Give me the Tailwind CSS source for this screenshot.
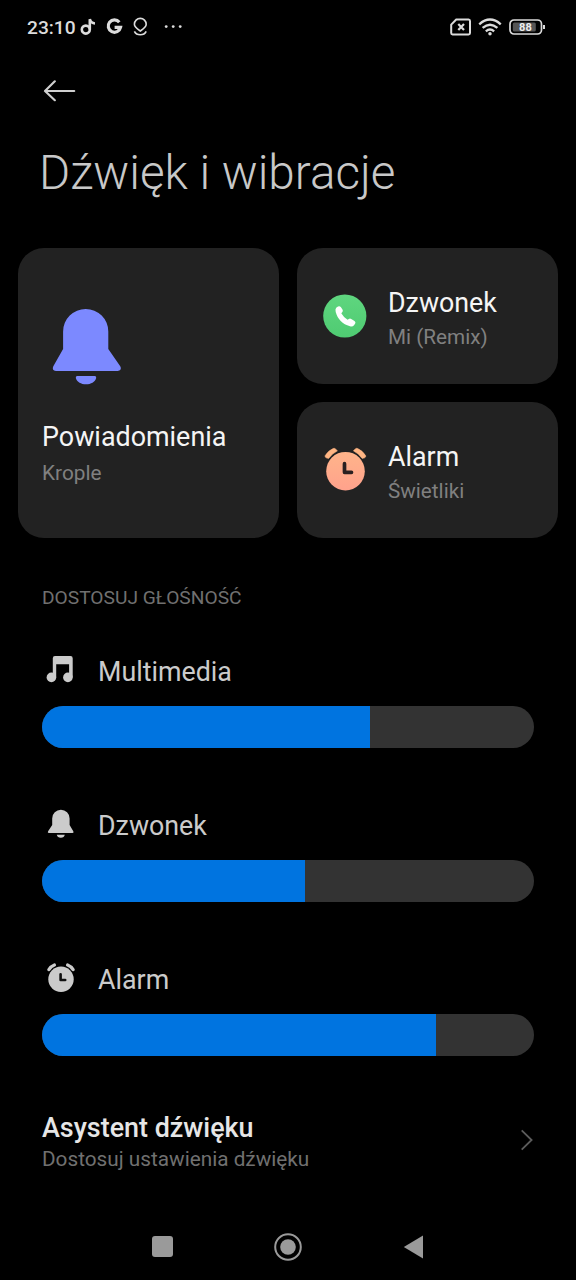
<!DOCTYPE html>
<html lang="pl">
<head>
<meta charset="utf-8">
<title>Dźwięk i wibracje</title>
<script src="https://cdn.jsdelivr.net/npm/@tailwindcss/browser@4"></script>
</head>
<body class="bg-black">
<div class="w-[576px] h-[1280px] overflow-hidden bg-black font-['Roboto',sans-serif] flex flex-col whitespace-nowrap">

  <!-- Status bar -->
  <header class="h-[54px] shrink-0 flex items-center justify-between pl-[27px] pr-[30px] text-[#dcdcdc]">
    <div class="flex items-center">
      <span class="w-[53px] pt-px text-[19.2px] leading-[24px] font-medium">23:10</span>
      <svg class="w-[17px] h-[20px]" viewBox="0 0 17 20" fill="none" stroke="currentColor"><circle cx="5.8" cy="12.6" r="4" stroke-width="2.6"/><path d="M9.8 12.6V2.2C10.5 4.8 12.3 6.4 15 6.5" stroke-width="2.6"/></svg>
      <svg class="ml-[9px] w-[17px] h-[18px]" viewBox="0 0 17 18" fill="none" stroke="currentColor" stroke-width="3.2"><path d="M13.3 4.2A6.2 6.2 0 1 0 14.5 9.4H8.6"/></svg>
      <svg class="ml-[8px] w-[18px] h-[20px]" viewBox="0 0 18 20" fill="none" stroke="currentColor" stroke-width="1.6"><path d="M9.3 14C6.6 12.2 3.4 10.4 3.4 7.3A5.9 5.9 0 0 1 15.2 7.3C15.2 10.4 12 12.2 9.3 14Z"/><path d="M3.4 14.4Q5 17.8 9.3 17.8T15.2 14.4" /></svg>
      <svg class="ml-[15px] w-[20px] h-[4px]" viewBox="0 0 20 4" fill="currentColor"><circle cx="2.2" cy="1.6" r="1.4"/><circle cx="9.2" cy="1.6" r="1.4"/><circle cx="16.2" cy="1.6" r="1.4"/></svg>
    </div>
    <div class="flex items-center">
      <svg class="w-[22px] h-[18px]" viewBox="0 0 22 18" fill="none" stroke="currentColor"><path d="M6.2 1.5H18.6Q20 1.5 20 3V15Q20 16.4 18.6 16.4H2.6Q1.2 16.4 1.2 15V6.6Z" stroke-width="2" stroke-linejoin="round"/><path d="M8.3 6L14 12M14 6L8.3 12" stroke-width="2.2"/></svg>
      <svg class="ml-[6px] w-[24px] h-[20px]" viewBox="0 0 25 20" fill="none" stroke="currentColor" stroke-width="2.5"><path d="M1.3 7.2Q12.5 -2.6 23.7 7.2"/><path d="M4.8 11Q12.5 4.2 20.2 11"/><path d="M8.2 14.6Q12.5 10.8 16.8 14.6"/><circle cx="12.5" cy="17" r="1.8" fill="currentColor" stroke="none"/></svg>
      <svg class="ml-[7px] w-[37px] h-[18px]" viewBox="0 0 37 18"><rect x="1" y="2" width="31.5" height="14" rx="4" fill="none" stroke="currentColor" stroke-width="1.7"/><rect x="3.8" y="4.6" width="23" height="8.8" rx="1.5" fill="#555"/><path d="M35 7V11" stroke="currentColor" stroke-width="2"/><text x="16.4" y="13" text-anchor="middle" font-family="Roboto" font-weight="700" font-size="11" fill="#eee">88</text></svg>
    </div>
  </header>

  <!-- Title -->
  <div class="h-[91px] shrink-0 pl-[43px] pt-[26px]">
    <svg class="w-[34px] h-[24px]" viewBox="0 0 34 24" fill="none" stroke="#cfcfcf" stroke-width="2.2" stroke-linecap="round" stroke-linejoin="round"><path d="M31.2 11H2M11.8 1.3L2 11L11.8 20.2"/></svg>
  </div>
  <h1 class="h-[102.5px] shrink-0 pl-[39px] text-[47.6px] leading-[56px] font-light text-[#c8c8c8]">Dźwięk i wibracje</h1>

  <!-- Sound cards -->
  <section class="h-[290px] shrink-0 grid grid-cols-2 grid-rows-2 gap-[18px] px-[18px]">
    <div class="row-span-2 bg-[#222222] rounded-[26px] pl-[24px] pt-[60px]">
      <svg class="ml-[10px] w-[70px] h-[78px]" viewBox="0 0 70 78" fill="#7c89ff"><path d="M11.1 23.5A22.6 22.6 0 0 1 56.3 23.5V41L67.9 57.8C69.9 60.6 68.5 63 65.5 63H4C1 63 0 60.6 1.6 57.8L11.1 41Z"/><path d="M25.3 68H42.7Q44.6 68 44.2 70C43 74 39 76.3 34 76.3S25 74 23.8 70Q23.4 68 25.3 68Z"/></svg>
      <div class="mt-[35px] text-[26.9px] leading-[32px] text-[#f5f5f5]">Powiadomienia</div>
      <div class="mt-[8px] text-[20.8px] leading-[25px] text-[#808080]">Krople</div>
    </div>
    <div class="bg-[#222222] rounded-[26px] pl-[26px] flex items-center">
      <svg class="w-[44px] h-[44px]" viewBox="0 0 44 44"><defs><linearGradient id="green" x1="0" y1="0" x2="0" y2="1"><stop offset="0" stop-color="#5fd67f"/><stop offset="1" stop-color="#4fcb72"/></linearGradient></defs><circle cx="21.8" cy="22" r="21.6" fill="url(#green)"/><path d="M13.2 13.8L15 12.5Q16.6 11.7 17.8 13L19.6 15.8Q20.3 17.2 19.2 18.3L18.3 19.3Q20.5 23.4 24.6 25.7L25.8 24.9Q27 24.2 28.2 24.9L31.5 26.9Q33 28 32.2 29.5L31 31.3Q29.6 33 27 32.3C19.5 30.2 14.6 25 12.7 18Q12 15.2 13.2 13.8Z" fill="#fff"/></svg>
      <div class="ml-[21px] pt-[9px]">
        <div class="text-[26.8px] leading-[34px] text-[#f5f5f5]">Dzwonek</div>
        <div class="text-[20.7px] leading-[34px] text-[#808080]">Mi (Remix)</div>
      </div>
    </div>
    <div class="bg-[#222222] rounded-[26px] pl-[26px] flex items-center">
      <svg class="w-[44px] h-[44px] -mt-[2px]" viewBox="0 0 44 44"><defs><linearGradient id="peach" x1="0" y1="0" x2="0" y2="1"><stop offset="0" stop-color="#ffb48a"/><stop offset="1" stop-color="#ffa28c"/></linearGradient></defs><path d="M2.2 8.6Q5.3 3.6 10.2 1.5Q11.5 1 12.5 2L14.4 3.8Q9 6.6 5.6 11.4L3.2 10.8Q1.6 10.2 2.2 8.6ZM42.6 8.6Q39.5 3.6 34.6 1.5Q33.3 1 32.3 2L30.4 3.8Q35.8 6.6 39.2 11.4L41.6 10.8Q43.2 10.2 42.6 8.6Z" fill="#ffb583" stroke="#ffb583" stroke-width=".6" stroke-linejoin="round"/><circle cx="22.5" cy="24.2" r="19.3" fill="url(#peach)"/><path d="M21.5 16.7V25.3H28.5" fill="none" stroke="#2a2020" stroke-width="3.7" stroke-linecap="round" stroke-linejoin="round"/></svg>
      <div class="ml-[21px] pt-[9px]">
        <div class="text-[26.8px] leading-[34px] text-[#f5f5f5]">Alarm</div>
        <div class="text-[20.7px] leading-[34px] text-[#808080]">Świetliki</div>
      </div>
    </div>
  </section>

  <!-- Volume sliders -->
  <h2 class="h-[113.5px] shrink-0 pt-[48px] pl-[42px] text-[19.2px] leading-[24px] text-[#707070]">DOSTOSUJ GŁOŚNOŚĆ</h2>
  <section class="shrink-0 px-[42px] text-[26.8px] leading-[40px] text-[#cbcbcb]">
    <div class="h-[154px]">
      <div class="h-[55px] flex items-start">
        <svg class="mt-[4px] ml-[4px] w-[30px] h-[32px]" viewBox="0 0 30 32" fill="#cbcbcb"><path d="M6.8 3.2Q6.8 1 9 1H24.5Q26.7 1 26.7 3.2V22.4H23.1V9.3H10.2V22.4H6.8Z"/><circle cx="5.4" cy="22.4" r="4.8"/><circle cx="21.9" cy="22.4" r="4.8"/></svg>
        <span class="ml-[22px] pt-px">Multimedia</span>
      </div>
      <div class="h-[42px] rounded-full bg-[#333333] overflow-hidden"><div class="h-full bg-[#0074e0]" style="width:66.7%"></div></div>
    </div>
    <div class="h-[154px]">
      <div class="h-[55px] flex items-start">
        <svg class="mt-[4px] ml-[4px] w-[30px] h-[32px]" viewBox="0 0 30 32" fill="#cbcbcb"><path d="M6.2 9.4A8.7 8.7 0 0 1 23.6 9.4V16.1L27.3 22.3Q28.2 24 26.6 24H2.8Q1.2 24 2.1 22.3L6.2 16.1Z"/><path d="M10.8 25.8H18.8Q18.2 28.8 14.8 28.8T10.8 25.8Z"/></svg>
        <span class="ml-[22px] pt-px">Dzwonek</span>
      </div>
      <div class="h-[42px] rounded-full bg-[#333333] overflow-hidden"><div class="h-full bg-[#0074e0]" style="width:53.4%"></div></div>
    </div>
    <div class="h-[154px]">
      <div class="h-[55px] flex items-start">
        <svg class="mt-[4px] ml-[4px] w-[30px] h-[32px]" viewBox="0 0 30 32" fill="#cbcbcb"><circle cx="15" cy="16.2" r="12.7"/><path d="M2.9 6.6Q5 3.3 8.4 2M27.1 6.6Q25 3.3 21.6 2" fill="none" stroke="#cbcbcb" stroke-width="3.2" stroke-linecap="round"/><path d="M14.6 11.3V17H19.2" fill="none" stroke="#111" stroke-width="2.6" stroke-linecap="round" stroke-linejoin="round"/></svg>
        <span class="ml-[22px] pt-px">Alarm</span>
      </div>
      <div class="h-[42px] rounded-full bg-[#333333] overflow-hidden"><div class="h-full bg-[#0074e0]" style="width:80%"></div></div>
    </div>
  </section>

  <!-- Sound assistant -->
  <section class="h-[60px] shrink-0 pl-[42px] pr-[42px] flex items-center justify-between">
    <div class="pt-px">
      <div class="text-[26.9px] leading-[32px] font-medium text-[#e6e6e6]">Asystent dźwięku</div>
      <div class="text-[20.75px] leading-[31px] text-[#707070]">Dostosuj ustawienia dźwięku</div>
    </div>
    <svg class="w-[14px] h-[22px] mt-[-6px]" viewBox="0 0 14 24" fill="none" stroke="#5c5c5c" stroke-width="2"><path d="M1.2 1.5L12 12L1.2 22.5"/></svg>
  </section>

  <!-- Navigation bar -->
  <nav class="grow pt-[40px] pl-[152px] flex items-center text-[#9a9a9a]">
    <div class="w-[21px] h-[21px] rounded-[3px] bg-current"></div>
    <svg class="ml-[101px] w-[28px] h-[28px]" viewBox="0 0 28 28"><circle cx="14" cy="14" r="12.8" fill="none" stroke="currentColor" stroke-width="2"/><circle cx="14" cy="14" r="7.8" fill="currentColor"/></svg>
    <svg class="ml-[101px] w-[22px] h-[24px]" viewBox="0 0 22 24" fill="currentColor"><path d="M.8 12L20 .5V23.5Z"/></svg>
  </nav>
</div>
</body>
</html>
